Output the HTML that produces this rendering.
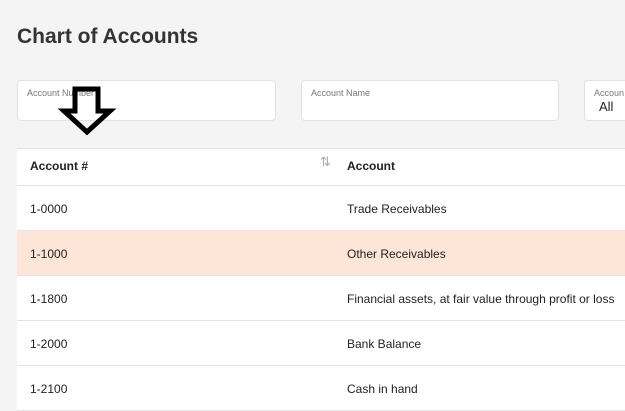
<!DOCTYPE html>
<html><head><style>
body{margin:0;width:625px;height:407px;overflow:hidden;background:#f4f4f4;font-family:"Liberation Sans",sans-serif;position:relative;color:#222}
.t{position:absolute;left:17px;top:25px;font-size:21px;color:#333;font-weight:bold}
.f{position:absolute;top:80px;height:41px;background:#fff;border:1px solid #e2e2e2;border-radius:4px;box-sizing:border-box}
.f span{position:absolute;left:9px;top:7px;font-size:9px;color:#777}
.tbl{position:absolute;left:17px;top:148px;width:620px;background:#fff}
.r{height:44px;border-bottom:1px solid #e4e4e4;position:relative;font-size:12px}
.r div{position:absolute;top:16px}
.h{height:36px;border-top:1px solid #e4e4e4;border-bottom:1px solid #e4e4e4;position:relative;font-size:12px;font-weight:bold}
.h div{position:absolute;top:10px}
</style></head><body>
<div class="t">Chart of Accounts</div>
<div class="f" style="left:17px;width:259px"><span>Account Number</span></div>
<div class="f" style="left:301px;width:258px"><span>Account Name</span></div>
<div class="f" style="left:584px;width:60px"><span style="left:9px">Accoun</span><span style="top:18px;font-size:13px;color:#222;left:14px">All</span></div>
<div class="tbl">
<div class="h"><div style="left:13px">Account #</div><div style="left:303px;font-weight:normal;color:#aaa;font-size:13px;top:5px">⇅</div><div style="left:330px">Account</div></div>
<div class="r"><div style="left:13px">1-0000</div><div style="left:330px">Trade Receivables</div></div>
<div class="r" style="background:#fde6d8"><div style="left:13px">1-1000</div><div style="left:330px">Other Receivables</div></div>
<div class="r"><div style="left:13px">1-1800</div><div style="left:330px">Financial assets, at fair value through profit or loss</div></div>
<div class="r"><div style="left:13px">1-2000</div><div style="left:330px">Bank Balance</div></div>
<div class="r"><div style="left:13px">1-2100</div><div style="left:330px">Cash in hand</div></div>
</div>
<svg style="position:absolute;left:0;top:0" width="625" height="407"><path d="M75 89 H98 V111 H110 L87 132 L64 111 H75 Z" fill="none" stroke="#000" stroke-width="5" stroke-linejoin="miter"/></svg>
</body></html>
